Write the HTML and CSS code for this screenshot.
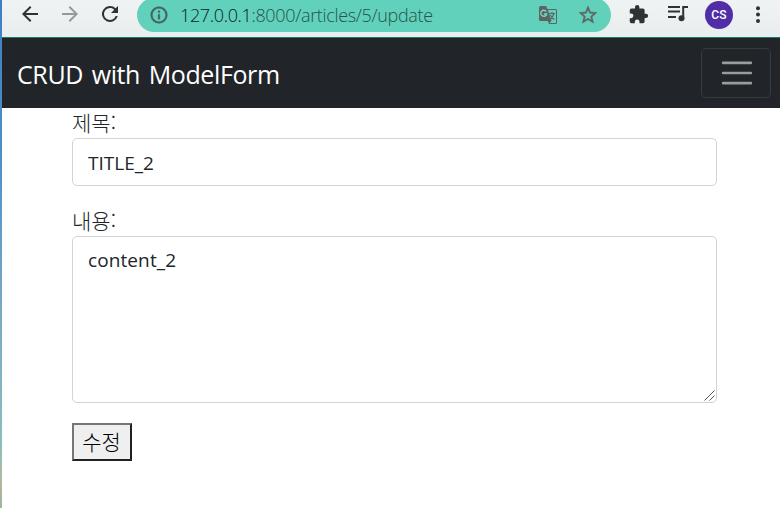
FILE: index.html
```html
<!DOCTYPE html>
<html lang="ko">
<head>
<meta charset="utf-8">
<title>CRUD with ModelForm</title>
<link rel="stylesheet" href="styles.css">
</head>
<body>
<div class="desktop-edge"></div>
<div class="window">
  <header class="toolbar">
    <svg class="icon back" viewBox="0 0 24 24"><path d="M20 11H7.8l5.6-5.6L12 4l-8 8 8 8 1.4-1.4L7.8 13H20z"/></svg>
    <svg class="icon forward" viewBox="0 0 24 24"><path d="M4 11h12.2l-5.6-5.6L12 4l8 8-8 8-1.4-1.4 5.6-5.6H4z"/></svg>
    <svg class="icon reload" viewBox="0 0 24 24"><path d="M17.65 6.35A8 8 0 1 0 19.73 14h-2.08A6 6 0 1 1 12 6c1.66 0 3.14.69 4.22 1.78L13 11h7V4z"/></svg>
    <div class="address">
      <svg class="icon info" viewBox="0 0 24 24"><path d="M11 7h2v2h-2zm0 4h2v6h-2zm1-9a10 10 0 1 0 0 20 10 10 0 0 0 0-20zm0 18a8 8 0 1 1 0-16 8 8 0 0 1 0 16z"/></svg>
      <span class="url"><span class="host">127.0.0.1</span>:8000/articles/5/update</span>
      <svg class="icon translate" viewBox="0 0 18 18"><path d="M1.500 0H7l1.500 3H16.500Q18 3 18 4.500v12Q18 18 16.500 18H10l-1.200-3H1.500Q0 15 0 13.500v-12Q0 0 1.500 0z"/><path class="pane" d="M8.900 4H16.500q.5 0 .5.500v12q0 .5-.5.500h-6l2-2.200z"/><path class="g" d="M7.200 5.500A3 3 0 1 0 7.700 8H5"/><path class="glyph" d="M10 7.500h6M13 6v1.500M15 7.500q-1 3.500-3.500 5M11.300 9q1.500 2.500 4 4.500"/></svg>
      <svg class="icon star" viewBox="0 0 24 24"><path d="m22 9.240-7.190-.62L12 2 9.190 8.630 2 9.240l5.460 4.730L5.820 21 12 17.270 18.180 21l-1.630-7.030zM12 15.400l-3.760 2.270 1-4.280-3.320-2.880 4.380-.38L12 6.100l1.710 4.040 4.380.38-3.320 2.880 1 4.280z"/></svg>
    </div>
    <svg class="icon puzzle" viewBox="0 0 24 24"><path d="M20.500 11H19V7a2 2 0 0 0-2-2h-4V3.500a2.500 2.500 0 0 0-5 0V5H4a2 2 0 0 0-2 2v3.800h1.500a2.700 2.700 0 0 1 0 5.400H2V20a2 2 0 0 0 2 2h3.800v-1.500a2.700 2.700 0 0 1 5.400 0V22H17a2 2 0 0 0 2-2v-4h1.500a2.500 2.500 0 0 0 0-5z"/></svg>
    <svg class="icon music" viewBox="0 0 20 17"><path class="lines" d="M0 2h12M0 6.500h12M0 12h8M15.200 13V2H20"/><circle cx="13.500" cy="13.200" r="3"/></svg>
    <div class="avatar">CS</div>
    <svg class="icon more" viewBox="0 0 4 18"><circle cx="2" cy="2.200" r="2"/><circle cx="2" cy="8.600" r="2"/><circle cx="2" cy="15" r="2"/></svg>
  </header>
  <nav class="navbar">
    <a class="brand">CRUD with ModelForm</a>
    <button class="toggler" type="button" aria-label="Menu"><svg viewBox="0 0 30 30"><path d="M4 7h22M4 15h22M4 23h22"/></svg></button>
  </nav>
  <form class="form">
    <label for="title">제목:</label>
    <input id="title" type="text" value="TITLE_2">
    <label for="content">내용:</label>
    <div class="area">
      <textarea id="content">content_2</textarea>
      <svg class="grip" viewBox="0 0 11 11"><path d="M.5 10.500l10-10M5.500 10.500l5-5"/></svg>
    </div>
    <button class="submit" type="button">수정</button>
  </form>
</div>
</body>
</html>
```
FILE: styles.css
```css
* { box-sizing: border-box; }
body {
  margin: 0;
  height: 508px;
  display: flex;
  overflow: hidden;
  background: #fff;
  color: #212529;
  font-family: "Open Sans", "Noto Sans CJK KR", sans-serif;
}
.desktop-edge {
  width: 2px;
  background: linear-gradient(#3f7ec4 0, #4f8dc9 30%, #76a9c4 60%, #8fbcbc 88%, #b5b9a0 94%, #9eb59c);
}
.window { flex: 1; min-width: 0; }
.toolbar {
  height: 38px;
  display: flex;
  align-items: flex-start;
  background: linear-gradient(#f0f3f4, #e9eded);
  border-bottom: 1px solid #147d69;
}
.icon { display: block; flex: none; fill: #303236; }
.back, .forward, .reload { width: 24px; height: 24px; margin-top: 2px; }
.back { margin-left: 16px; }
.forward { margin-left: 16px; fill: #96999b; }
.reload { margin-left: 16px; }
.address {
  width: 474px;
  height: 34px;
  margin: -2px 0 0 15px;
  padding-left: 12px;
  display: flex;
  background: #62d1bb;
  border-radius: 17px;
}
.info { width: 20px; height: 20px; margin-top: 7px; fill: #46605c; stroke: #46605c; stroke-width: .5; }
.url {
  width: 358px;
  margin-left: 11px;
  line-height: 34px;
  font-size: 18px;
  font-weight: 300;
  color: #24544c;
  white-space: nowrap;
  letter-spacing: -.34px;
}
.host { color: #08211d; }
.translate { width: 18px; height: 18px; margin: 8px 0 0 1px; fill: #5b6563; }
.translate .pane { fill: #62d1bb; }
.translate .g { fill: none; stroke: #77d5c3; stroke-width: 1.4; }
.translate .glyph { fill: none; stroke: #5b6563; stroke-width: 1.2; }
.star { width: 22px; height: 22px; margin: 6px 0 0 20px; fill: #5b6563; stroke: #5b6563; stroke-width: .4; }
.puzzle { width: 21px; height: 21px; margin: 4px 0 0 17px; }
.music { width: 20px; height: 17px; margin: 5px 0 0 19px; }
.music .lines { fill: none; stroke: #303236; stroke-width: 2; }
.avatar {
  width: 28px;
  height: 28px;
  margin: 1px 0 0 17px;
  border-radius: 50%;
  background: #512da8;
  color: #fff;
  font: 500 12px/28px Roboto, sans-serif;
  letter-spacing: .2px;
  text-align: center;
}
.more { width: 4px; height: 18px; margin: 6px 0 0 23px; }
.navbar {
  height: 70px;
  padding: 0 9px 0 15px;
  display: flex;
  align-items: center;
  justify-content: space-between;
  background: #212529;
}
.brand {
  color: #fff;
  font-size: 25px;
  line-height: 38px;
  padding-top: 2px;
  white-space: nowrap;
  letter-spacing: -.38px;
  word-spacing: 2.5px;
}
.toggler {
  width: 70px;
  height: 50px;
  padding: 0 0 0 1px;
  display: flex;
  align-items: center;
  justify-content: center;
  background: none;
  border: 1px solid #373b3e;
  border-radius: 5px;
}
.toggler svg { width: 38px; height: 38px; }
.toggler path { stroke: #999b9c; stroke-width: 2; stroke-linecap: round; stroke-miterlimit: 10; }
.form { width: 645px; margin-left: 70px; }
.form label {
  display: block;
  height: 30px;
  font: 300 21px/28px "Noto Sans CJK KR", sans-serif;
}
.form input, .form textarea {
  display: block;
  width: 100%;
  border: 1px solid #ced4da;
  border-radius: 5px;
  background: #fff;
  color: #212529;
  font: 19px/30px "Open Sans", sans-serif;
}
.form input { height: 48px; padding: 2px 15px 0; margin-bottom: 20px; }
.area { position: relative; margin-bottom: 20px; }
.form textarea { height: 167px; padding: 8px 15px; resize: none; overflow: auto; letter-spacing: .1px; }
.grip {
  position: absolute;
  right: 2px;
  bottom: 2px;
  width: 11px;
  height: 11px;
  fill: none;
  stroke: #555;
  stroke-width: 1;
}
.submit {
  width: 60px;
  height: 38px;
  padding: 0 1px 2px 0;
  border: 2px solid;
  border-color: #767676 #212121 #212121 #767676;
  border-radius: 0;
  background: #efefef;
  color: #000;
  font: 300 21px/30px "Noto Sans CJK KR", sans-serif;
}
```
